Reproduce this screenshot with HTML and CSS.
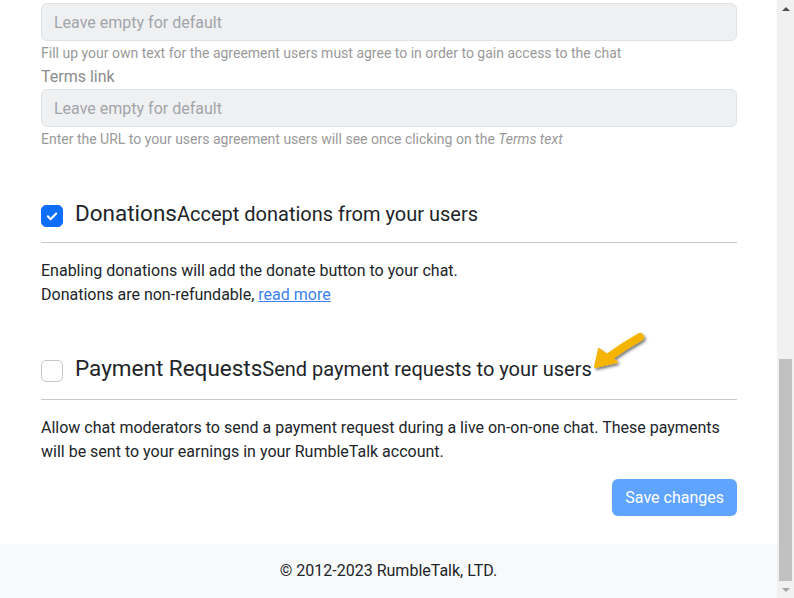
FILE: index.html
```html
<!DOCTYPE html>
<html lang="en">
<head>
  <meta charset="UTF-8">
  <meta name="viewport" content="width=device-width, initial-scale=1.0">
  <title>Chat settings</title>
  <link rel="stylesheet" href="styles.css">
</head>
<body>
  <div class="window">
    <div class="page">
      <div class="content">
        <input class="field-input" type="text" placeholder="Leave empty for default">
        <div class="field-help">Fill up your own text for the agreement users must agree to in order to gain access to the chat</div>
        <label class="field-label">Terms link</label>
        <input class="field-input" type="text" placeholder="Leave empty for default">
        <div class="field-help">Enter the URL to your users agreement users will see once clicking on the <em>Terms text</em></div>

        <div class="section">
          <div class="section-head">
            <span class="check checked">
              <svg viewBox="0 0 20 20" width="14" height="14"><path d="M4 10.5l4 4 8-8" fill="none" stroke="#fff" stroke-width="3" stroke-linecap="round" stroke-linejoin="round"/></svg>
            </span>
            <h3 class="section-title">Donations<small>Accept donations from your users</small></h3>
          </div>
          <hr class="divider">
          <p class="section-text">Enabling donations will add the donate button to your chat.<br>Donations are non-refundable, <a href="#">read more</a></p>
        </div>

        <div class="section">
          <div class="section-head">
            <span class="check"></span>
            <h3 class="section-title">Payment Requests<small>Send payment requests to your users</small></h3>
            <svg class="pointer" viewBox="0 0 60 46" width="60" height="46">
              <defs>
                <filter id="shade" x="-30%" y="-30%" width="160%" height="160%">
                  <feDropShadow dx="1.5" dy="2" stdDeviation="1.5" flood-color="#000" flood-opacity="0.55"/>
                </filter>
              </defs>
              <g filter="url(#shade)">
                <path d="M50 8 Q34 17 19 28" fill="none" stroke="#f5b400" stroke-width="8" stroke-linecap="round"/>
                <path d="M5 38 L9 20 L27 33 Z" fill="#f5b400" stroke="#f5b400" stroke-width="2" stroke-linejoin="round"/>
              </g>
            </svg>
          </div>
          <hr class="divider">
          <p class="section-text">Allow chat moderators to send a payment request during a live on-on-one chat. These payments will be sent to your earnings in your RumbleTalk account.</p>
        </div>

        <div class="actions">
          <button class="btn-save" type="button">Save changes</button>
        </div>
      </div>
      <footer class="footer">&copy; 2012-2023 RumbleTalk, LTD.</footer>
    </div>

    <div class="scrollbar">
      <div class="scroll-btn up"></div>
      <div class="scroll-track"><div class="scroll-thumb"></div></div>
      <div class="scroll-btn down"></div>
    </div>
  </div>
</body>
</html>
```

FILE: styles.css
```css
* {
  margin: 0;
  padding: 0;
  box-sizing: border-box;
}

html, body {
  height: 100%;
  overflow: hidden;
}

body {
  font-family: Roboto, "Liberation Sans", sans-serif;
  color: #212529;
  background: #fff;
}

.window {
  display: flex;
  height: 598px;
}

.page {
  flex: 1;
  display: flex;
  flex-direction: column;
}

.content {
  padding: 3px 40px 28px 41px;
}

.field-input {
  display: block;
  width: 100%;
  height: 38px;
  padding: 6px 12px;
  border: 1px solid #dfe1e4;
  border-radius: 6px;
  background: #eff0f2;
  font-family: inherit;
  font-size: 16px;
  color: #212529;
}

.field-input::placeholder {
  color: #a2a5aa;
}

.field-help {
  margin-top: 2px;
  font-size: 14px;
  line-height: 21px;
  color: #9a9a9a;
}

.field-label {
  display: block;
  font-size: 16px;
  line-height: 25px;
  color: #8c8c8c;
}

.section {
  margin-top: 47px;
}

.section + .section {
  margin-top: 45px;
}

.section-head {
  position: relative;
  display: flex;
  align-items: flex-start;
}

.check {
  flex: none;
  width: 22px;
  height: 22px;
  margin-top: 8px;
  margin-right: 12px;
  border: 1px solid #c4c6c9;
  border-radius: 5px;
  background: #fff;
  display: flex;
  align-items: center;
  justify-content: center;
}

.check.checked {
  background: #0d6efd;
  border-color: #0d6efd;
}

.section-title {
  padding-top: 2px;
  font-size: 22.5px;
  font-weight: 400;
  line-height: 28px;
  color: #212529;
}

.section-title small {
  font-size: 20px;
}

.pointer {
  position: absolute;
  left: 549px;
  top: -23px;
}

.divider {
  border: 0;
  border-top: 1px solid #c8c8c8;
  margin-top: 14px;
}

.section + .section .divider {
  margin-top: 16px;
}

.section-text {
  margin-top: 16px;
  font-size: 16px;
  line-height: 24px;
  color: #212529;
}

.section-text a {
  color: #3d7ff0;
  text-decoration: underline;
}

.actions {
  display: flex;
  justify-content: flex-end;
  margin-top: 15px;
}

.btn-save {
  height: 37px;
  padding: 0 13px;
  border: 0;
  border-radius: 6px;
  background: #5fa4fe;
  color: #fff;
  font-family: inherit;
  font-size: 16px;
}

.footer {
  flex: 1;
  background: #f8f9fa;
  text-align: center;
  padding-top: 15px;
  font-size: 16px;
  line-height: 24px;
  color: #212529;
}

.scrollbar {
  width: 17px;
  flex: none;
  background: #f1f1f1;
  display: flex;
  flex-direction: column;
}

.scroll-btn {
  height: 17px;
  flex: none;
  display: flex;
  align-items: center;
  justify-content: center;
}

.scroll-btn::after {
  content: "";
  border-left: 4px solid transparent;
  border-right: 4px solid transparent;
}

.scroll-btn.up::after {
  border-bottom: 4px solid #505050;
}

.scroll-btn.down::after {
  border-top: 4px solid #a3a3a3;
}

.scroll-track {
  flex: 1;
  display: flex;
  flex-direction: column;
}

.scroll-thumb {
  margin: auto 2px 0;
  height: 222px;
  background: #c1c1c1;
}
```
